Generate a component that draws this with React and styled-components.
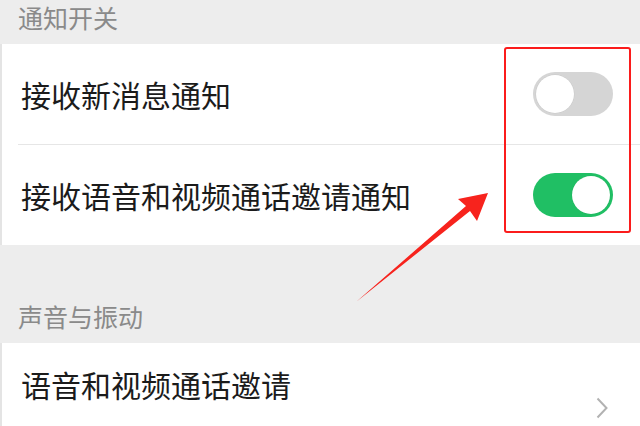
import React from "react";
import styled, { createGlobalStyle } from "styled-components";

const GlobalStyle = createGlobalStyle`
  body {
    margin: 0;
    background: #ededed;
    overflow: hidden;
    font-family: "Noto Sans CJK SC", "Noto Sans", sans-serif;
  }
`;

const Page = styled.div`
  position: relative;
  width: 640px;
  height: 426px;
  overflow: hidden;
  background: #ededed;
`;

// gray section title, text sits near the bottom of the band
const SectionHeader = styled.div`
  height: ${(p) => p.height}px;
  display: flex;
  align-items: flex-end;
  box-sizing: border-box;
  padding: 0 0 10px 18px;
  font-size: 25px;
  line-height: 34px;
  color: #8a8a8a;
`;

const Group = styled.div`
  background: #fff;
  border-left: 2px solid #e4e4e4;
`;

const Row = styled.div`
  height: ${(p) => p.height || 100}px;
  display: flex;
  align-items: center;
  justify-content: space-between;
  padding: 0 27px 0 19px;
  box-sizing: border-box;
`;

const Label = styled.span`
  font-size: 30px;
  line-height: 40px;
  color: #1b1b1b;
`;

const Divider = styled.div`
  height: 1px;
  margin-left: 16px;
  background: #e6e6e6;
`;

const Track = styled.div`
  position: relative;
  width: 80px;
  height: 44px;
  border-radius: 22px;
  background: ${(p) => (p.on ? "#20bf64" : "#d5d5d5")};
`;

const Knob = styled.div`
  position: absolute;
  top: 3px;
  left: ${(p) => (p.on ? "39px" : "3px")};
  width: 38px;
  height: 38px;
  border-radius: 50%;
  background: #fff;
  box-shadow: 0 0 0 0.5px rgba(0, 0, 0, 0.06);
`;

const Toggle = ({ on }) => (
  <Track on={on ? 1 : 0}>
    <Knob on={on ? 1 : 0} />
  </Track>
);

const LinkRow = styled.div`
  height: 130px;
  display: flex;
  align-items: center;
  justify-content: space-between;
  padding: 0 32px 0 19px;
  box-sizing: border-box;
`;

const TextCol = styled.div`
  display: flex;
  flex-direction: column;
  align-self: flex-start;
  padding-top: 21px;
`;

const SubLabel = styled.span`
  margin-top: 19px;
  font-size: 22px;
  line-height: 30px;
  color: #a0a0a0;
`;

const Chevron = () => (
  <svg width="12" height="22" viewBox="0 0 12 22">
    <path d="M1.5 1.5 L10.5 11 L1.5 20.5" fill="none" stroke="#b2b2b2" strokeWidth="2" />
  </svg>
);

// annotation drawn over the screenshot
const HighlightBox = styled.div`
  position: absolute;
  left: 504px;
  top: 47px;
  width: 127px;
  height: 186px;
  box-sizing: border-box;
  border: 2px solid #fb1c1c;
  border-radius: 3px;
`;

const ArrowLayer = styled.svg`
  position: absolute;
  left: 0;
  top: 0;
  pointer-events: none;
`;

export default function App() {
  return (
    <>
      <GlobalStyle />
      <Page>
        <SectionHeader height={44}>通知开关</SectionHeader>
        <Group>
          <Row>
            <Label>接收新消息通知</Label>
            <Toggle />
          </Row>
          <Divider />
          <Row>
            <Label>接收语音和视频通话邀请通知</Label>
            <Toggle on />
          </Row>
        </Group>
        <SectionHeader height={98}>声音与振动</SectionHeader>
        <Group>
          <LinkRow>
            <TextCol>
              <Label>语音和视频通话邀请</Label>
              <SubLabel>来电铃声、振动与通知横幅设置</SubLabel>
            </TextCol>
            <Chevron />
          </LinkRow>
        </Group>

        <HighlightBox />
        <ArrowLayer width="640" height="426" viewBox="0 0 640 426">
          <polygon
            points="356,302 470,211 477,221 488,193 458,199 466,206"
            fill="#f7231d"
          />
        </ArrowLayer>
      </Page>
    </>
  );
}
